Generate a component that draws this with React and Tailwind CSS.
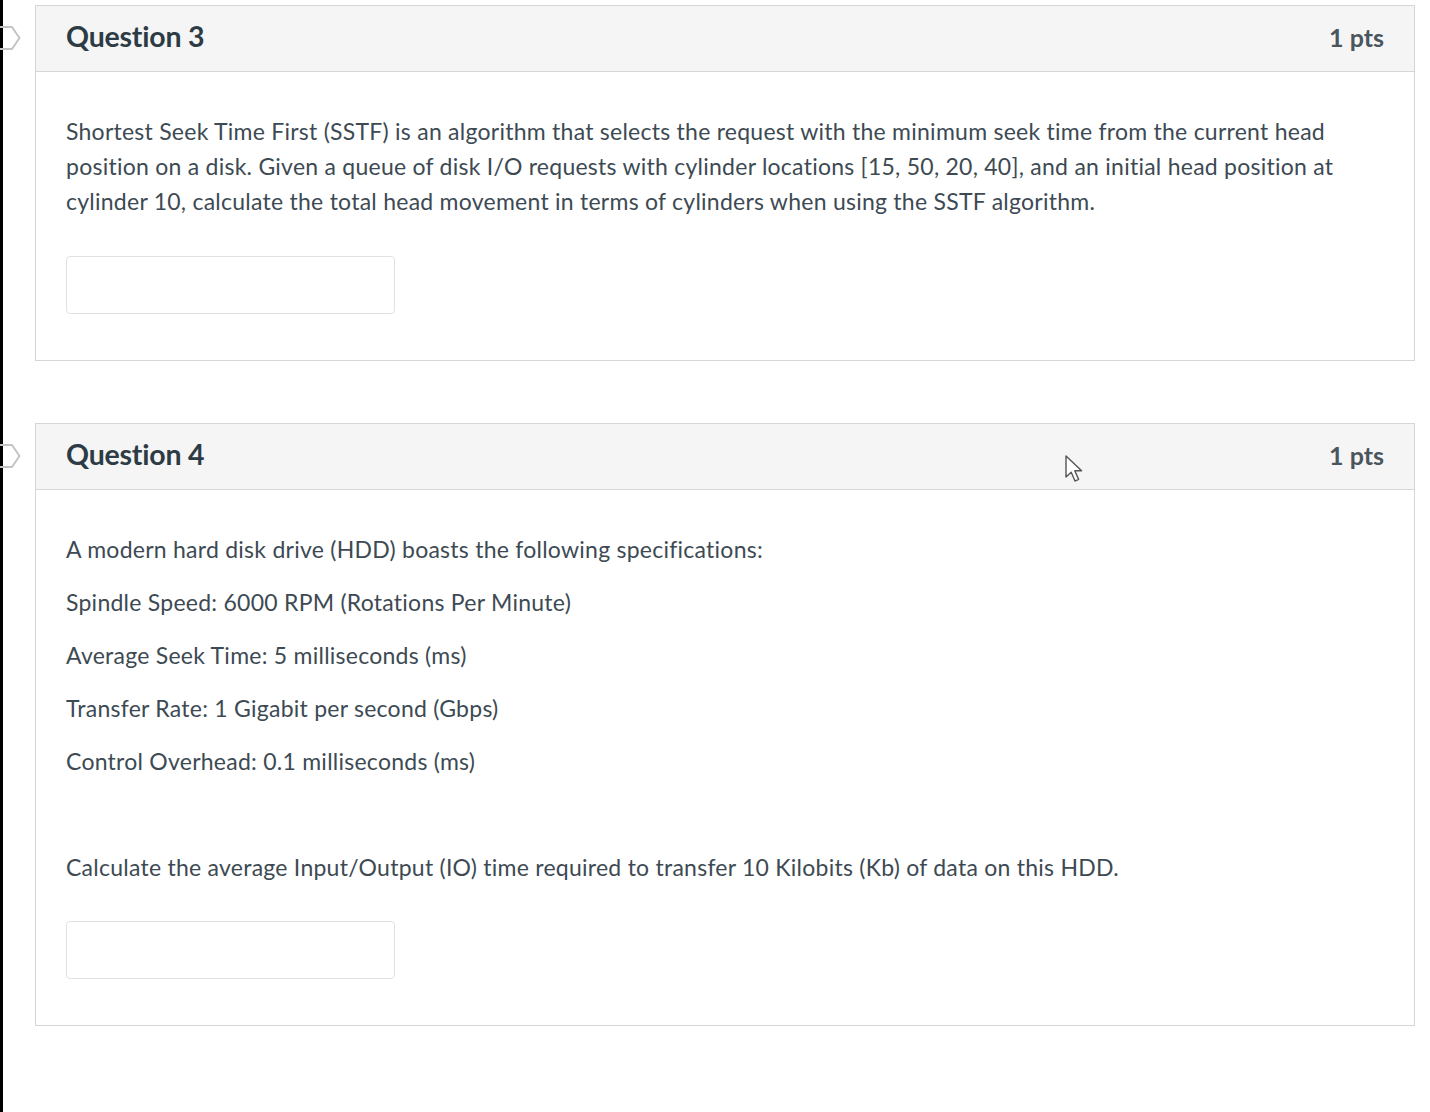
import React from 'react';

const FlagMark = () => (
  <svg width="24" height="26" viewBox="0 0 24 26" fill="none" className="absolute -left-[37px] top-[19px]">
    <path d="M-4 2 H13 L20.5 13 L13 24 H-4" stroke="#c4c4c4" strokeWidth="2" strokeLinejoin="round" />
  </svg>
);

const Cursor = () => (
  <svg width="22" height="30" viewBox="0 0 22 30" className="absolute left-[1029px] top-[31px]">
    <path
      d="M1 1 L1 22 L6.2 17.2 L10 26 L13.6 24.4 L9.8 15.8 L16.6 15.8 Z"
      fill="#ffffff"
      stroke="#555"
      strokeWidth="1.4"
      strokeLinejoin="round"
    />
  </svg>
);

const AnswerBox = () => (
  <div className="w-[329px] h-[58px] rounded-[4px] border border-[#e2e2e2] bg-white" />
);

const QuestionCard = ({ title, points, children, cursor }) => (
  <div className="relative border border-[#d6d6d6] bg-white">
    <div className="relative h-[66px] flex items-center justify-between px-[30px] bg-[#f5f5f5] border-b border-[#d6d6d6]">
      <FlagMark />
      <h2 className="text-[28.5px] font-bold text-[#2d3b45] tracking-[-0.2px] -mt-[4px]">{title}</h2>
      {cursor && <Cursor />}
      <span className="text-[25px] font-bold text-[#4a555d] -mt-[2px]">{points}</span>
    </div>
    <div className="px-[30px] text-[23px] tracking-[0.25px] leading-[35px] text-[#3d4a53]">{children}</div>
  </div>
);

export default function App() {
  return (
    <div className="min-h-[1112px] bg-white flex" style={{ fontFamily: 'Lato, "Open Sans", sans-serif' }}>
      <div className="w-[3px] bg-black shrink-0" />
      <div className="flex-1 pl-[32px] pr-[15px] pt-[5px] flex flex-col gap-[62px]">
        <QuestionCard title="Question 3" points="1 pts">
          <div className="pt-[42px]">
            <p>
              Shortest Seek Time First (SSTF) is an algorithm that selects the request with the minimum seek time from
              the current head position on a disk. Given a queue of disk I/O requests with cylinder locations [15, 50,
              20, 40], and an initial head position at cylinder 10, calculate the total head movement in terms of
              cylinders when using the SSTF algorithm.
            </p>
          </div>
          <div className="pt-[37px] pb-[46px]">
            <AnswerBox />
          </div>
        </QuestionCard>

        <QuestionCard title="Question 4" points="1 pts" cursor>
          <div className="pt-[42px] flex flex-col gap-[18px]">
            <p>A modern hard disk drive (HDD) boasts the following specifications:</p>
            <p>Spindle Speed: 6000 RPM (Rotations Per Minute)</p>
            <p>Average Seek Time: 5 milliseconds (ms)</p>
            <p>Transfer Rate: 1 Gigabit per second (Gbps)</p>
            <p>Control Overhead: 0.1 milliseconds (ms)</p>
            <p className="h-[35px]">&nbsp;</p>
            <p>Calculate the average Input/Output (IO) time required to transfer 10 Kilobits (Kb) of data on this HDD.</p>
          </div>
          <div className="pt-[36px] pb-[46px]">
            <AnswerBox />
          </div>
        </QuestionCard>
      </div>
    </div>
  );
}
